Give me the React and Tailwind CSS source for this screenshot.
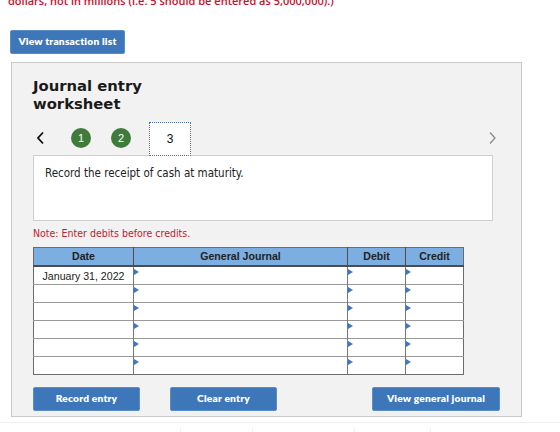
import React from 'react';

const rows = ['January 31, 2022', '', '', '', '', ''];

const Marker = () => (
  <span className="absolute left-0 top-[2px] w-0 h-0 border-y-[3px] border-y-transparent border-l-[5px] border-l-[#3a78c9]" />
);

const Btn = ({ children, className = '' }) => (
  <button
    className={`h-[24px] rounded-[2px] bg-[#3d76b9] border border-[#5a8cc6] text-white text-[10.2px] font-extrabold tracking-[0.2px] ${className}`}
    style={{ fontFamily: 'Lato, "Liberation Sans", sans-serif' }}
  >
    {children}
  </button>
);

export default function App() {
  return (
    <div className="relative w-[560px] h-[432px] overflow-hidden bg-white">
      {/* instruction line, scrolled mostly off the top */}
      <p
        className="absolute left-[8px] top-[-7px] text-[11px] leading-[16px] font-semibold text-[#c8102e] whitespace-nowrap"
        style={{ fontFamily: '"Open Sans", "Liberation Sans", sans-serif' }}
      >
        dollars, not in millions (i.e. 5 should be entered as 5,000,000).)
      </p>

      <div className="flex pt-[30px] pl-[10px]">
        <Btn className="w-[115px]">View transaction list</Btn>
      </div>

      {/* worksheet panel */}
      <div className="mt-[8px] ml-[11px] w-[511px] h-[355px] bg-[#f2f2f2] border border-[#c9c9c9] pl-[21px] pt-[14px]">
        <h2
          className="text-[14.8px] font-bold leading-[18px] text-[#1a1a1a]"
          style={{ fontFamily: '"DejaVu Sans", Verdana, sans-serif' }}
        >
          Journal entry
          <br />
          worksheet
        </h2>

        <div className="relative flex items-center h-[34px] mt-[8px]" style={{ fontFamily: '"Liberation Sans", Arial, sans-serif' }}>
          <svg width="9" height="14" viewBox="0 0 9 14" className="ml-[3px]">
            <path d="M7 1.5 L2 7 L7 12.5" fill="none" stroke="#111" strokeWidth="1.8" />
          </svg>
          <span className="ml-[26px] w-[20px] h-[20px] rounded-full bg-[#3f7c3b] text-white text-[11px] flex items-center justify-center">1</span>
          <span className="ml-[20px] w-[20px] h-[20px] rounded-full bg-[#3f7c3b] text-white text-[11px] flex items-center justify-center">2</span>
          <span className="relative z-10 ml-[18px] mt-[2px] w-[42px] h-[34px] bg-white border border-dotted border-[#3c74c4] text-[12px] text-[#111] flex items-center justify-center">3</span>
          <svg width="9" height="14" viewBox="0 0 9 14" className="absolute left-[455px] top-[10px]">
            <path d="M2 1.5 L7 7 L2 12.5" fill="none" stroke="#8a8a8a" strokeWidth="1.3" />
          </svg>
        </div>

        <div
          className="w-[460px] h-[66px] bg-white border border-[#cfcfcf] px-[11px] pt-[9px] text-[11.5px] text-[#222]"
          style={{ fontFamily: '"DejaVu Sans Condensed", "DejaVu Sans", sans-serif' }}
        >
          Record the receipt of cash at maturity.
        </div>

        <p
          className="mt-[5px] text-[10.5px] text-[#c0202e]"
          style={{ fontFamily: '"DejaVu Sans Condensed", "DejaVu Sans", sans-serif' }}
        >
          Note: Enter debits before credits.
        </p>

        <table
          className="mt-[5px] w-[431px] border-collapse border-[1.5px] border-[#6b6b6b] text-[10.6px]"
          style={{ fontFamily: '"Liberation Sans", Arial, sans-serif' }}
        >
          <thead>
            <tr className="h-[19px] bg-[#7caee2] text-[#222]">
              <th className="w-[100px] border-r-[1.5px] border-b-[2px] border-[#4d4d4d] font-bold">Date</th>
              <th className="w-[214px] border-r-[1.5px] border-b-[2px] border-[#4d4d4d] font-bold">General Journal</th>
              <th className="w-[58px] border-r-[1.5px] border-b-[2px] border-[#4d4d4d] font-bold">Debit</th>
              <th className="w-[58px] border-b-[2px] border-[#4d4d4d] font-bold">Credit</th>
            </tr>
          </thead>
          <tbody className="bg-white">
            {rows.map((d, i) => (
              <tr key={i} className="h-[18px] border-t border-[#999]">
                <td className="text-center text-[#222] border-r-[1.5px] border-[#777] leading-[16px]">{d}</td>
                <td className="relative border-r-[1.5px] border-[#777]"><Marker /></td>
                <td className="relative border-r-[1.5px] border-[#777]"><Marker /></td>
                <td className="relative"><Marker /></td>
              </tr>
            ))}
          </tbody>
        </table>

        <div className="flex mt-[12px]">
          <Btn className="w-[107px]">Record entry</Btn>
          <Btn className="w-[107px] ml-[30px]">Clear entry</Btn>
          <Btn className="w-[128px] ml-[95px]">View general journal</Btn>
        </div>
      </div>

      {/* faint grid peeking in below */}
      <div className="mt-[5px] h-[20px] border-t border-[#f0f0f0] flex">
        <div className="w-[180px]" />
        <div className="w-[72px] border-l border-[#f0f0f0] mt-[5px]" />
        <div className="w-[102px] border-l border-[#f0f0f0] mt-[5px]" />
        <div className="w-[76px] border-l border-[#f0f0f0] mt-[5px]" />
        <div className="border-l border-[#f0f0f0] mt-[5px]" />
      </div>
    </div>
  );
}
